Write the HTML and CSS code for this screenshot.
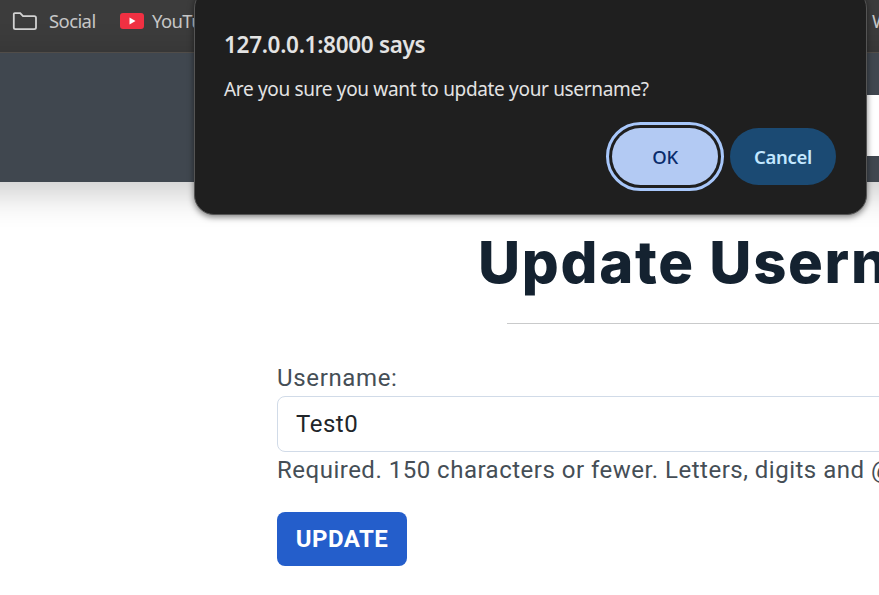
FILE: index.html
```html
<!DOCTYPE html>
<html lang="en">
<head>
<meta charset="utf-8">
<title>Update Username</title>
<link rel="stylesheet" href="styles.css">
</head>
<body>
<div class="bookmarks">
  <svg class="folder" viewBox="0 0 26 20"><path d="M2.8 2.1h5.4l2.8 3h11.2q1.8 0 1.8 1.6v9.9q0 1.6-1.8 1.6H3.4q-1.6 0-1.6-1.6V3.1q0-1 1-1z" fill="none" stroke="#d2d2d2" stroke-width="1.8"/></svg>
  <span class="social">Social</span>
  <svg class="tube" viewBox="0 0 24 16"><rect width="24" height="16" rx="3" fill="#f03042"/><path d="M9.5 4.6v6.8l6-3.4z" fill="#fff"/></svg>
  <span class="youtube">YouTube</span>
  <span class="last">W</span>
</div>
<header class="site-header"><div class="search"></div></header>
<main class="page">
  <h1>Update Username</h1>
  <hr>
  <form>
    <label class="label" for="username">Username:</label>
    <input id="username" type="text" value="Test0">
    <p class="help">Required. 150 characters or fewer. Letters, digits and @/./+/-/_ only.</p>
    <button class="update" type="button">UPDATE</button>
  </form>
</main>
<div class="dialog" role="dialog">
  <h2>127.0.0.1:8000 says</h2>
  <p>Are you sure you want to update your username?</p>
  <div class="actions">
    <button class="ok" type="button">OK</button>
    <button class="cancel" type="button">Cancel</button>
  </div>
</div>
</body>
</html>
```
FILE: styles.css
```css
* { box-sizing: border-box; }
html, body { height: 100%; overflow: hidden; }
body { margin: 0; position: relative; background: #fff; font-family: Roboto, "Liberation Sans", sans-serif; color: #454e56; }
.bookmarks { height: 53px; background: #3c3c3c; border-bottom: 1px solid #585450; display: flex; align-items: center; padding: 0 0 11px 12px; font: 18.5px/24px "Noto Sans", sans-serif; letter-spacing: -.6px; color: #c7c7c7; white-space: nowrap; }
.folder { width: 26px; height: 20px; flex: none; }
.social { margin-left: 11px; width: 71px; flex: none; }
.tube { width: 24px; height: 16px; flex: none; }
.youtube { margin-left: 8px; width: 720px; flex: none; }
.last { flex: none; }
.site-header { height: 129px; margin: 0 -40px; padding: 42px 40px 0 0; background: #40474f; box-shadow: 0 8px 32px 4px rgba(0,0,0,.2); display: flex; justify-content: flex-end; }
.search { width: 79px; height: 61px; background: #fff; }
.page { padding-left: 277px; white-space: nowrap; }
h1 { margin: 45px 0 0 201px; height: 71px; font-family: Inter, sans-serif; font-size: 58px; line-height: 70px; font-weight: 800; color: #142230; letter-spacing: 1.7px; }
hr { margin: 25px 0 0 230px; border: 0; height: 1px; background: #c9cacb; }
form { margin-top: 39px; width: 1020px; }
.label { display: block; height: 33px; font-size: 24px; line-height: 30px; letter-spacing: .65px; }
input { display: block; width: 1020px; height: 56px; border: 1px solid #d1dbe8; border-radius: 8px; padding: 0 18px; font: 24px Roboto, sans-serif; color: #212529; letter-spacing: .5px; background: #fff; }
.help { margin: 2px 0 0; height: 58px; font-size: 24px; line-height: 32px; letter-spacing: .5px; }
.update { display: block; width: 130px; height: 54px; padding: 0; border: 0; border-radius: 8px; background: #245ecb; color: #fff; font: 700 24px Roboto, sans-serif; letter-spacing: .5px; }
.dialog { position: absolute; left: 194px; top: -12px; width: 673px; height: 227px; border: 1px solid #555; border-radius: 20px; background: #1f1f1f; box-shadow: 0 2px 6px rgba(0,0,0,.5); padding: 40px 30px 0 29px; font-family: "Noto Sans", sans-serif; color: #e3e3e3; white-space: nowrap; }
.dialog h2 { margin: 0; font-size: 22.5px; line-height: 32px; font-weight: 600; letter-spacing: -.3px; }
.dialog p { margin: 13px 0 0; font-size: 19px; line-height: 30px; letter-spacing: -.33px; }
.actions { display: flex; justify-content: flex-end; gap: 12px; margin-top: 24px; }
.actions button { width: 106px; height: 57px; border: 0; border-radius: 29px; padding: 0; font: 600 18.5px "Noto Sans", sans-serif; letter-spacing: -.3px; }
.actions .ok { background: #b3caf3; color: #0a2c6c; outline: 3px solid #a8c7fa; outline-offset: 3px; font-weight: 500; }
.actions .cancel { background: #1b4a73; color: #c2e7ff; }
```
